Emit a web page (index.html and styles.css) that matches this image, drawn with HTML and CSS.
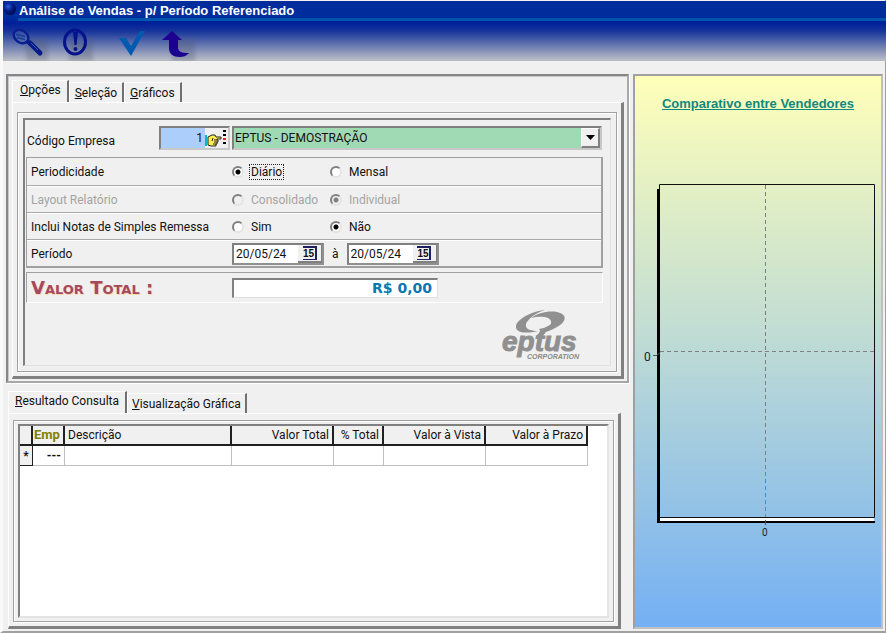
FILE: index.html
```html
<!DOCTYPE html>
<html lang="pt-BR">
<head>
<meta charset="utf-8">
<title>Análise de Vendas - p/ Período Referenciado</title>
<link rel="stylesheet" href="styles.css">
</head>
<body>
<div class="window">
  <header class="header">
    <div class="titlebar">
      <svg class="app-icon" width="13" height="14" viewBox="0 0 13 14" aria-hidden="true">
        <defs><radialGradient id="ball" cx=".35" cy=".3" r=".7"><stop offset="0" stop-color="#2c62d8"/><stop offset=".5" stop-color="#04208c"/><stop offset="1" stop-color="#000a4c"/></radialGradient></defs>
        <circle cx="6" cy="8" r="6" fill="url(#ball)"/>
      </svg>
      <h1 class="title">Análise de Vendas - p/ Período Referenciado</h1>
    </div>
    <nav class="toolbar" aria-label="Ferramentas">
      <button class="tool" aria-label="Pesquisar">
        <svg width="44" height="38" viewBox="0 0 44 38">
          <rect class="cast" x="18" y="16" width="22" height="22"/>
          <ellipse cx="13" cy="13.500" rx="8" ry="6" transform="rotate(35 13 13.500)" fill="#5f7bb4" fill-opacity=".35" stroke="#0a1f90" stroke-width="2.500"/>
          <path d="M8 11.500l9 2M9 14.500l8 2" stroke="#1c3a9c" stroke-width="1.500"/>
          <path d="M18 18l4 3" stroke="#0a1f90" stroke-width="3"/>
          <path d="M22 20l10 10" stroke="#061a88" stroke-width="5" stroke-linecap="round"/>
          <path d="M23 20l7 7" stroke="#3c5cb4" stroke-width="1"/>
        </svg>
      </button>
      <button class="tool" aria-label="Informações">
        <svg width="44" height="38" viewBox="0 0 44 38">
          <rect class="cast" x="16" y="16" width="24" height="22"/>
          <ellipse cx="22" cy="19" rx="10.500" ry="12" fill="none" stroke="#06128c" stroke-width="3"/>
          <path d="M20 9h5l-1.500 13h-2z" fill="#06128c"/><circle cx="22.500" cy="26" r="2" fill="#06128c"/>
        </svg>
      </button>
      <button class="tool tool-wide" aria-label="Confirmar">
        <svg width="44" height="38" viewBox="0 0 44 38">
          <path d="M7 15h7l5 8L28 8h5L19 33z" fill="#005bb0"/>
        </svg>
      </button>
      <button class="tool" aria-label="Voltar">
        <svg width="44" height="38" viewBox="0 0 44 38">
          <rect class="cast" x="18" y="16" width="23" height="22"/>
          <path d="M18 8l10 9h-4v7c0 5 4 6 11 6-3 3-6 4-9 4-7 0-11-3-11-9v-8H8z" fill="#1c0090"/>
        </svg>
      </button>
    </nav>
  </header>

  <main class="main">
    <div class="left">
      <section class="frame">
        <div class="tabs" role="tablist">
          <button class="tab tab-active" role="tab" aria-selected="true"><u>O</u>pções</button>
          <button class="tab" role="tab" aria-selected="false"><u>S</u>eleção</button>
          <button class="tab" role="tab" aria-selected="false"><u>G</u>ráficos</button>
        </div>
        <div class="page">
          <div class="etched">
            <form class="form">
              <div class="company">
                <label for="codigo">Código Empresa</label>
                <span class="field lookup">
                  <input id="codigo" type="text" value="1">
                  <button type="button" class="hand" aria-label="Localizar empresa">
                    <svg width="23" height="18" viewBox="0 0 23 18">
                      <path d="M1 6v11" stroke="#00b8c8" stroke-width="2"/>
                      <path d="M3 8l4-2h3l1 2h5v2h-4v1h1v2h-1v2h-1v2H6l-3-1z" fill="#ffee50" stroke="#222" stroke-width="1"/>
                      <path d="M8 9l-1 3M9 11h3M9 13h3M8 15h3" stroke="#222" stroke-width="1"/>
                      <path d="M19.500 1v16" stroke="#000" stroke-width="3" stroke-dasharray="2 2"/>
                      <path d="M19.500 9v2" stroke="#f02020" stroke-width="3"/>
                    </svg>
                  </button>
                </span>
                <span class="field combo">
                  <select aria-label="Empresa"><option>EPTUS - DEMOSTRAÇÃO</option></select>
                  <span class="arrow"><svg width="9" height="5" viewBox="0 0 9 5"><path d="M0 0h9L4.500 5z"/></svg></span>
                </span>
              </div>

              <div class="options">
                <div class="row" role="radiogroup" aria-label="Periodicidade">
                  <span>Periodicidade</span>
                  <label class="choice"><input type="radio" name="per" checked><span class="focused">Diário</span></label>
                  <label class="choice"><input type="radio" name="per"><span>Mensal</span></label>
                </div>
                <div class="row row-off" role="radiogroup" aria-label="Layout Relatório">
                  <span>Layout Relatório</span>
                  <label class="choice"><input type="radio" name="lay" disabled><span>Consolidado</span></label>
                  <label class="choice"><input type="radio" name="lay" disabled checked><span>Individual</span></label>
                </div>
                <div class="row" role="radiogroup" aria-label="Inclui Notas de Simples Remessa">
                  <span>Inclui Notas de Simples Remessa</span>
                  <label class="choice"><input type="radio" name="rem"><span>Sim</span></label>
                  <label class="choice"><input type="radio" name="rem" checked><span>Não</span></label>
                </div>
                <div class="row">
                  <label for="inicio">Período</label>
                  <div class="dates">
                    <span class="field date"><input id="inicio" type="text" value="20/05/24"><button type="button" class="cal" aria-label="Calendário inicial"><span>15</span></button></span>
                    <label for="fim">à</label>
                    <span class="field date"><input id="fim" type="text" value="20/05/24"><button type="button" class="cal" aria-label="Calendário final"><span>15</span></button></span>
                  </div>
                </div>
              </div>

              <div class="total">
                <label for="total">Valor Total :</label>
                <input id="total" type="text" value="R$ 0,00" readonly>
              </div>

              <svg class="logo" width="84" height="50" viewBox="0 0 84 50" role="img" aria-label="eptus corporation">
                <g fill="#909090">
                  <path d="M44 1C31 2 16 10 15 17c-1 7 10 8 22 5-8 0-13-2-12-7C27 10 34 4 44 1z"/>
                  <path d="M30 9c8-6 21-8 29-5 8 3 5 10-3 14-5 3-10 5-16 6 7-4 11-8 10-12-2-5-12-5-20-3z"/>
                  <path d="M54 11c-1 7-9 9-13 18l-6-2c4-4 5-5 3-7 7-1 12-4 16-9z"/>
                </g>
                <text class="logo-name" x="1" y="42">eptus</text>
                <text class="logo-sub" x="26" y="50">CORPORATION</text>
              </svg>
            </form>
          </div>
        </div>
      </section>

      <section class="results">
        <div class="tabs" role="tablist">
          <button class="tab tab-active" role="tab" aria-selected="true"><u>R</u>esultado Consulta</button>
          <button class="tab" role="tab" aria-selected="false"><u>V</u>isualização Gráfica</button>
        </div>
        <div class="page">
          <div class="etched">
            <div class="sheet">
              <table>
                <colgroup><col class="c-mark"><col class="c-emp"><col class="c-desc"><col class="c-val"><col class="c-pct"><col class="c-val"><col class="c-val"></colgroup>
                <thead>
                  <tr><th></th><th class="emp">Emp</th><th class="txt">Descrição</th><th>Valor Total</th><th>% Total</th><th>Valor à Vista</th><th>Valor à Prazo</th></tr>
                </thead>
                <tbody>
                  <tr><td class="mark">*</td><td class="dash">---</td><td></td><td></td><td></td><td></td><td></td></tr>
                </tbody>
              </table>
            </div>
          </div>
        </div>
      </section>
    </div>

    <aside class="chart">
      <h2>Comparativo entre Vendedores</h2>
      <svg class="plot" viewBox="0 0 246 370" role="img" aria-label="Comparativo entre Vendedores">
        <path d="M24.500 3.500h215v333h-215z" fill="none" stroke="#101010"/>
        <path d="M23.500 8v334" stroke="#000" stroke-width="3"/>
        <path d="M25 338.500h214" stroke="#fff" stroke-width="3"/>
        <path d="M22 341h218" stroke="#000" stroke-width="2"/>
        <path d="M130.500 4v332M25 170.500h214" fill="none" stroke="#7c8080" stroke-dasharray="4 3"/>
        <path d="M18 174.500h4l3-3M130.500 339v5" fill="none" stroke="#555"/>
        <text class="axis" x="9" y="180">0</text>
        <text class="axis axis-small" x="127" y="355">0</text>
      </svg>
    </aside>
  </main>
</div>
</body>
</html>
```

FILE: styles.css
```css
* { box-sizing: border-box; }

body {
  margin: 0;
  background: #f0f0f0;
  color: #111;
  font: 12px/16px Roboto, "Liberation Sans", sans-serif;
}

button, input, select { font: inherit; color: inherit; margin: 0; padding: 0; border: 0; border-radius: 0; }

.window {
  display: flex;
  flex-direction: column;
  min-height: 100vh;
  padding-top: 1px;
  border-left: 3px solid #fafafa;
  border-right: 1px solid #a0a0a0;
  border-bottom: 2px solid #a0a0a0;
}

/* Header */
.header {
  margin-right: -1px;
  background: linear-gradient(#002c9c 0, #002c9c 16px, #00209a 22px, #16349a 30px, #b4b8c4 58px, #b9bcc4 60px);
}
.titlebar { display: flex; height: 20px; padding-left: 1px; gap: 1px; }
.title {
  flex: 1;
  margin: 0;
  padding-left: 1px;
  border-bottom: 3px solid #0055ac;
  color: #fff;
  font: bold 13px/19px "Liberation Sans", sans-serif;
}
.toolbar { display: flex; height: 40px; padding: 2px 5px 0; gap: 1px; }
.tool { width: 44px; background: none; }
.tool svg { display: block; }
.tool-wide { margin: 0 -3px 0 14px; }
.cast { fill: #505870; opacity: .3; filter: blur(2px); }

/* Main areas */
.main { flex: 1; display: grid; grid-template-columns: 1fr 250px; gap: 4px; padding: 13px 2px 2px 3px; }
.left { display: flex; flex-direction: column; gap: 8px; min-width: 0; }

.frame {
  padding: 4px 3px 2px 4px;
  border: 2px solid;
  border-color: #868686 #a8a8a8 #a8a8a8 #868686;
  box-shadow: inset 1px 1px #c8c8cc, 1px 1px #fff;
}
.results { flex: 1; display: flex; flex-direction: column; padding: 0 8px 0 2px; }

.tabs { display: flex; align-items: flex-end; height: 22px; }
.tab {
  height: 20px;
  padding: 0 5px;
  border: 1px solid #fff;
  border-right: 2px solid #707070;
  border-bottom: 0;
  background: #f0f0f0;
}
.tab-active { height: 22px; padding: 0 6px 3px 7px; }
.results .tab { padding-left: 4px; padding-right: 4px; }
.results .tab-active { padding: 0 6px 3px; }

.page {
  padding: 9px 4px 4px;
  border: 1px solid #fff;
  border-right: 3px solid #808080;
  border-bottom: 3px solid #808080;
}
.results .page { flex: 1; display: flex; padding: 6px 4px 4px; }
.etched {
  padding: 5px;
  border: 1px solid #a0a0a0;
  box-shadow: 1px 1px #fff, inset 1px 1px #fff;
}
.results .etched { flex: 1; display: flex; padding: 3px 4px; }

/* Form */
.form {
  display: flex;
  flex-direction: column;
  padding: 6px 7px 6px 1px;
  border: 1px solid;
  border-width: 2px 1px 1px 2px;
  border-color: #808080 #e0e0e0 #e0e0e0 #808080;
}
.field {
  display: flex;
  height: 24px;
  border: 2px solid;
  border-color: #808080 #c8c8c8 #c8c8c8 #808080;
  background: #fff;
}
.field input { flex: 1; width: 0; min-width: 0; }
.company { display: flex; align-items: center; gap: 2px; padding-right: 1px; }
.company label { width: 131px; padding: 6px 0 0 1px; }
.lookup { width: 71px; background: #abcffa; }
.lookup input { background: #abcffa; text-align: right; padding-right: 2px; }
.hand { width: 23px; background: #f0f0f0; }
.hand svg { display: block; }
.combo { flex: 1; position: relative; }
.combo select { appearance: none; width: 100%; padding-left: 1px; background: #a0dab4; }
.arrow {
  position: absolute;
  inset: 0 0 0 auto;
  display: grid;
  place-items: center;
  width: 19px;
  border: 1px solid;
  border-width: 1px 2px 2px 1px;
  border-color: #fff #808080 #808080 #fff;
  background: #f0f0f0;
  pointer-events: none;
}

.options { margin-top: 7px; border: 1px solid #a0a0a0; border-right-width: 2px; border-bottom-width: 2px; }
.row {
  display: grid;
  grid-template-columns: 201px 98px 1fr;
  align-items: center;
  height: 27px;
  padding: 1px 0 0 4px;
}
.row + .row { border-top: 1px solid #a8a8a8; box-shadow: inset 0 1px #fff; }
.row-off { color: #a4a4a4; }
.choice { display: flex; align-items: center; gap: 6px; }
.choice span { padding: 0 1px; line-height: 14px; }
.focused { outline: 1px dotted #222; }
.choice input {
  appearance: none;
  width: 12px;
  height: 12px;
  border: 2px solid;
  border-color: #808080 #e4e4e4 #e4e4e4 #808080;
  border-radius: 50%;
  background: #fff;
}
.choice input:checked { background: radial-gradient(circle, #000 2px, #fff 3px); }
.row-off input { background: #f0f0f0; }
.row-off input:checked { background: radial-gradient(circle, #808080 2px, #f0f0f0 3px); }
.dates { grid-column: 2 / -1; display: flex; align-items: center; gap: 8px; }
.date { width: 92px; height: 22px; border-color: #808080 #909090 #909090 #808080; }
.date input { padding-left: 2px; }
.cal {
  display: grid;
  place-items: center;
  width: 24px;
  border: solid #808080;
  border-width: 0 1px 2px 0;
  background: #f0f0f0;
}
.cal span {
  width: 14px;
  border: solid #202060;
  border-width: 2px 2px 1px 0;
  font: bold 10px/11px "Liberation Sans", sans-serif;
}

.total {
  display: flex;
  align-items: center;
  height: 31px;
  margin-top: 4px;
  padding-left: 4px;
  border: 1px solid;
  border-color: #a0a0a0 #fff #fff #a0a0a0;
  font-family: "DejaVu Sans", sans-serif;
  font-weight: bold;
}
.total label { width: 201px; color: #a84860; font-size: 18px; font-variant: small-caps; text-shadow: 1px 1px #f8d8a8; }
.total input {
  width: 206px;
  height: 20px;
  padding-right: 5px;
  border: 1px solid;
  border-width: 2px 1px 1px 2px;
  border-color: #808080 #e0e0e0 #e0e0e0 #808080;
  background: #fff;
  color: #0878b0;
  font-size: 14px;
  text-align: right;
}

.logo { align-self: flex-end; margin: 6px 18px 0 0; }
.logo-name { fill: #909090; stroke: #909090; font: italic bold 28px "Liberation Sans", sans-serif; }
.logo-sub { fill: #888; font: italic bold 7px "Liberation Sans", sans-serif; }

/* Results table */
.sheet {
  flex: 1;
  border: 2px solid;
  border-color: #808080 #e4e4e4 #e4e4e4 #808080;
  background: #fff;
}
table { border-collapse: separate; border-spacing: 0; table-layout: fixed; width: 568px; }
.c-mark { width: 13px; }
.c-emp { width: 32px; }
.c-desc { width: 167px; }
.c-val { width: 102px; }
.c-pct { width: 50px; }
th, td { height: 20px; padding: 0 3px; text-align: right; font-weight: normal; white-space: nowrap; }
th { background: #f0f0f0; border-right: 2px solid #202020; border-bottom: 2px solid #202020; }
td { border-right: 1px solid #c0c0c0; border-bottom: 1px solid #c0c0c0; }
.txt { text-align: left; }
.emp { padding: 0 1px; color: #808000; font-size: 13px; font-weight: bold; text-align: left; }
.dash { font-weight: bold; }
.mark { background: #f0f0f0; border-color: #202020; text-align: center; font-weight: bold; }

/* Chart */
.chart {
  display: flex;
  flex-direction: column;
  border: 2px solid;
  border-color: #a0a0a0 #c0c0c0 #c0c0c0 #a0a0a0;
  background: linear-gradient(#ffffb8, #c0dcd4 47%, #74b0f4);
}
.chart h2 {
  margin: 20px 0 69px;
  color: #108880;
  font: bold 13px/16px "Liberation Sans", sans-serif;
  text-align: center;
  text-decoration: underline;
}
.plot { display: block; width: 100%; }
.axis { fill: #222; font-size: 12px; }
.axis-small { font-size: 10px; }
```
